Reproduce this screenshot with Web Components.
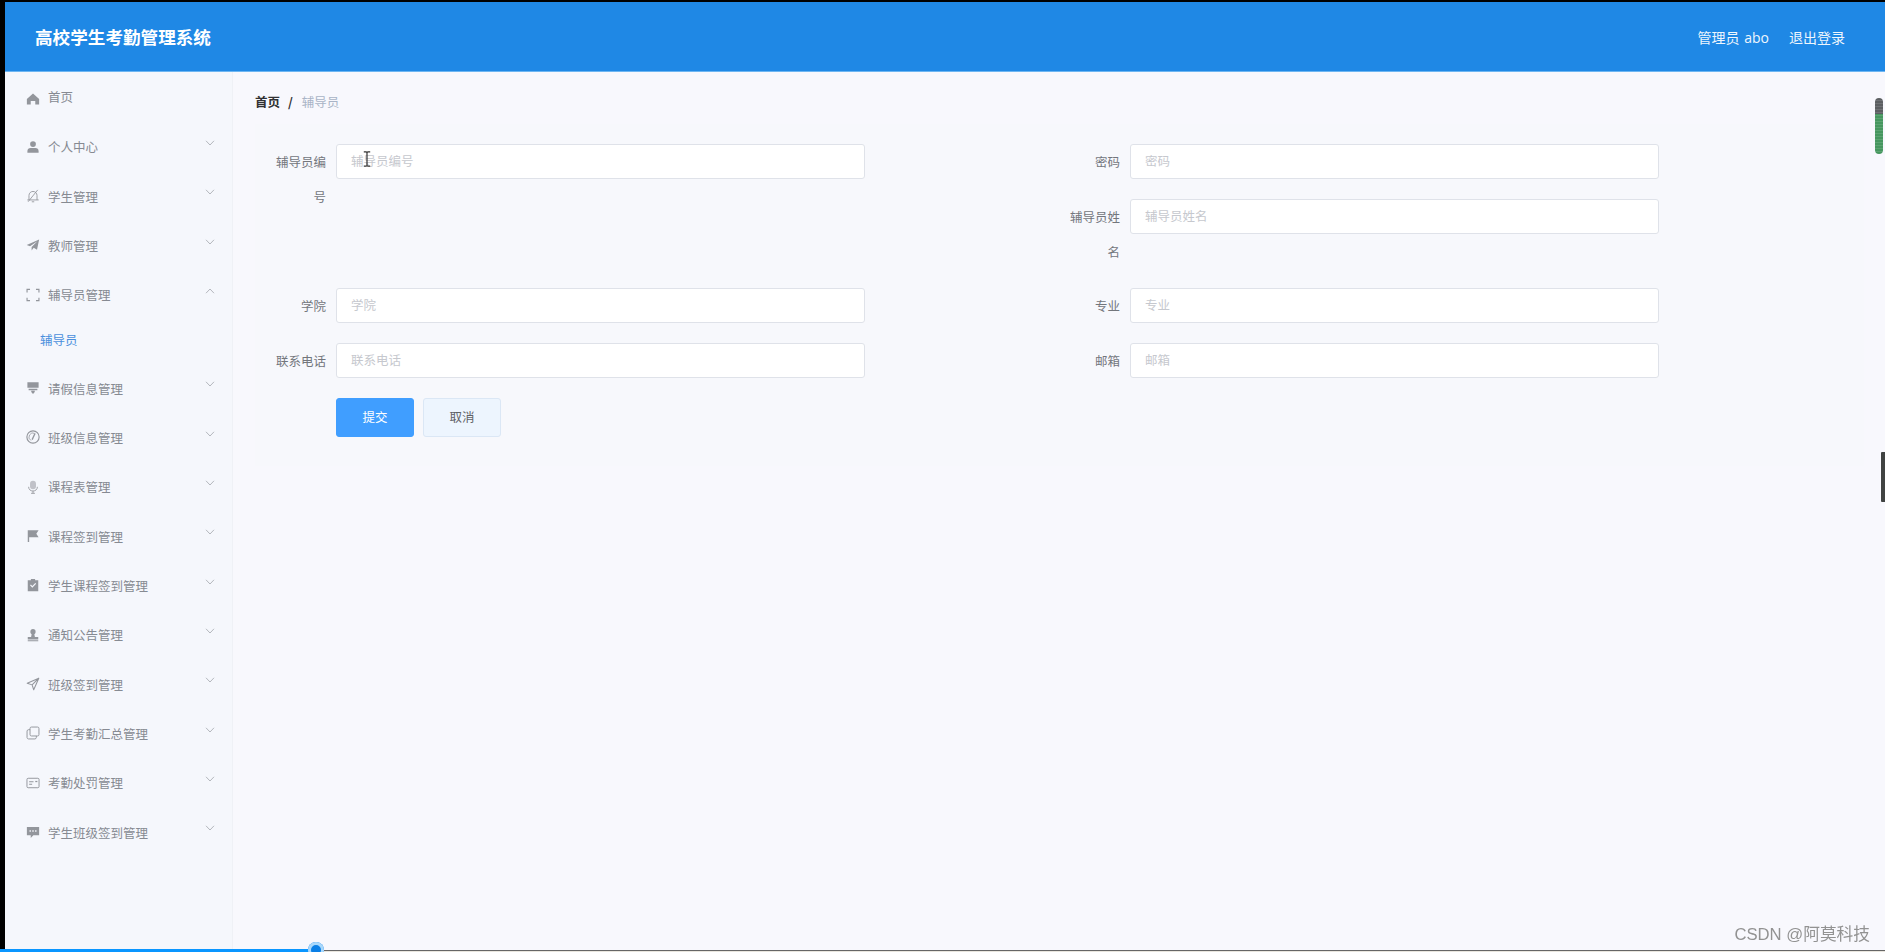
<!DOCTYPE html>
<html lang="zh">
<head>
<meta charset="utf-8">
<title>高校学生考勤管理系统</title>
<style>
  html, body { margin: 0; height: 100%; overflow: hidden; }
  body {
    background: #000;
    font-family: "Noto Sans CJK SC", "Noto Sans", sans-serif;
  }
</style>
</head>
<body>
<app-shell>
  <top-bar slot="top" title="高校学生考勤管理系统">
    <span>管理员 abo</span>
    <span>退出登录</span>
  </top-bar>
  <side-menu slot="side">
    <side-item class="first" icon="home" label="首页" plain></side-item>
    <side-item icon="user" label="个人中心"></side-item>
    <side-item icon="bell" label="学生管理"></side-item>
    <side-item icon="plane" label="教师管理"></side-item>
    <side-item icon="corners" label="辅导员管理" open><side-sub>辅导员</side-sub></side-item>
    <side-item icon="pin" label="请假信息管理"></side-item>
    <side-item icon="gauge" label="班级信息管理"></side-item>
    <side-item icon="mic" label="课程表管理"></side-item>
    <side-item icon="flag" label="课程签到管理"></side-item>
    <side-item icon="clip" label="学生课程签到管理"></side-item>
    <side-item icon="stamp" label="通知公告管理"></side-item>
    <side-item icon="send" label="班级签到管理"></side-item>
    <side-item icon="copy" label="学生考勤汇总管理"></side-item>
    <side-item icon="card" label="考勤处罚管理"></side-item>
    <side-item icon="chat" label="学生班级签到管理"></side-item>
  </side-menu>
  <crumb-bar home="首页" current="辅导员"></crumb-bar>
  <form-panel>
    <form-field class="tall" label="辅导员编号"></form-field>
    <form-field label="密码"></form-field>
    <form-field label="辅导员姓名"></form-field>
    <form-field label="学院"></form-field>
    <form-field label="专业"></form-field>
    <form-field label="联系电话"></form-field>
    <form-field label="邮箱"></form-field>
    <form-actions>
      <ui-button kind="primary">提交</ui-button>
      <ui-button>取消</ui-button>
    </form-actions>
  </form-panel>
</app-shell>
<screen-marks></screen-marks>

<script>
  const ICONS = {
    home: '<path fill="currentColor" d="M8 1.6 15 8v6.4h-4.4v-4.2H5.4v4.2H1V8z"/>',
    user: '<circle fill="currentColor" cx="8" cy="4.6" r="3.3"/><path fill="currentColor" d="M1.6 14.6v-2c0-2 1.6-3.4 3.6-3.4h5.6c2 0 3.6 1.4 3.6 3.4v2z"/>',
    bell: '<path fill="none" stroke="currentColor" d="M1.5 12.5h13M3.4 12.5V7.4C3.4 4.8 5.4 2.8 8 2.8s4.6 2 4.6 4.6v5.1M6.6 14.6h2.8M2.4 14.6 13.4 1"/>',
    plane: '<path fill="currentColor" d="M15 1.6 12.6 13.4 8.8 11 6.4 14.4V10.2L13 3.6 4.6 9.4.8 8z"/>',
    corners: '<path fill="none" stroke="currentColor" stroke-width="1.3" d="M1.2 5V1.5h3.4M11.4 1.5h3.4V5M14.8 11v3.5h-3.4M4.6 14.5H1.2V11"/>',
    pin: '<path fill="currentColor" d="M1.6 1.4h12.8v6.4H1.6zM3 8.8h10v1.8H3zM6 11.2h4v1.4L8 14.8 6 12.6z"/>',
    gauge: '<circle fill="none" stroke="currentColor" stroke-width="1.3" cx="8" cy="8" r="7"/><circle fill="none" stroke="currentColor" stroke-width=".8" cx="8" cy="8" r="4.6" stroke-dasharray="15 14" transform="rotate(120 8 8)"/><path fill="none" stroke="currentColor" stroke-width="1.5" d="M7 11 10 4.6"/>',
    mic: '<rect fill="currentColor" opacity=".55" x="4.6" y=".8" width="6.8" height="9.8" rx="3.4"/><path fill="none" stroke="currentColor" d="M3 7.8c0 3 2.2 4.8 5 4.8s5-1.8 5-4.8M8 12.6V15.2M5.8 15.2h4.4"/>',
    flag: '<path fill="currentColor" d="M2 1.4h12.4l-2.6 4 2.6 4H3.6v5.4H2z"/>',
    clip: '<path fill="currentColor" fill-rule="evenodd" d="M5.6 1h4.8v1.6H14v12.4H2V2.6h3.6zM4.6 8.4l2.6 2.7 4.4-4.5-1-1-3.4 3.4-1.6-1.6z"/>',
    stamp: '<circle fill="currentColor" cx="8" cy="4.2" r="3"/><path fill="currentColor" d="M6.6 6.6h2.8l.8 3.6H14v3H2v-3h3.8zM2 14h12v1H2z"/>',
    send: '<path fill="none" stroke="currentColor" stroke-width="1.2" stroke-linejoin="round" d="M14.6 1.4 1.4 7.2 7 9l1.8 5.6zM7 9l7.6-7.6"/>',
    copy: '<rect fill="none" stroke="currentColor" stroke-width="1.1" x="4.6" y="1.2" width="10.2" height="10.2" rx="1.6"/><path fill="none" stroke="currentColor" stroke-width="1.1" d="M4.6 4.2H2.8c-.9 0-1.6.7-1.6 1.6v7.4c0 .9.7 1.6 1.6 1.6h7.4c.9 0 1.6-.7 1.6-1.6v-1.8"/>',
    card: '<rect fill="none" stroke="currentColor" stroke-width="1.1" x="1.1" y="2.6" width="13.8" height="10.8" rx="1.4"/><path fill="none" stroke="currentColor" stroke-width="1.2" d="M3.6 6.6h5M3.6 9.4h3.4"/><path fill="currentColor" d="M10.6 5.6h2.4v1.4h-2.4z"/>',
    chat: '<path fill="currentColor" fill-rule="evenodd" d="M1 2.2h14v9.6H8.4L5.4 14.8V11.8H1zM4 6v1.6h1.6V6zM7.2 6v1.6h1.6V6zM10.4 6v1.6H12V6z"/>'
  };

  class AppShell extends HTMLElement {
    constructor() {
      super();
      this.attachShadow({ mode: 'open' });
      this.shadowRoot.innerHTML = `
      <style>
      :host {
        display: flex;
        flex-direction: column;
        height: 950px;
        margin: 2px 0 0 5px;
        background: #f8f8fd;
      }
      .body { flex: 1; display: flex; min-height: 0; }
      main { flex: 1; padding: 20px 21px 0 22px; min-width: 0; }
      </style>
      <slot name="top"></slot>
      <div class="body">
        <slot name="side"></slot>
        <main><slot></slot></main>
      </div>`;
    }
  }

  class TopBar extends HTMLElement {
    constructor() {
      super();
      this.attachShadow({ mode: 'open' });
      this.shadowRoot.innerHTML = `
      <style>
      :host {
        display: flex;
        align-items: center;
        justify-content: space-between;
        height: 69px;
        padding: 0 40px 0 30px;
        background: #1f88e5;
        border-bottom: 1px solid #6db6f2;
        color: #fff;
      }
      h1 { margin: 0; font-size: 17.6px; font-weight: 700; line-height: 70px; }
      .right {
        display: flex;
        gap: 20px;
        font: 14px "Open Sans", "Noto Sans CJK SC", sans-serif;
        word-spacing: 1px;
        color: #eef6fd;
      }
      </style>
      <h1></h1>
      <div class="right"><slot></slot></div>`;
      this.shadowRoot.querySelector('h1').textContent = this.getAttribute('title');
    }
  }

  class SideMenu extends HTMLElement {
    constructor() {
      super();
      this.attachShadow({ mode: 'open' });
      this.shadowRoot.innerHTML = `
      <style>
      :host {
        display: block;
        width: 227px;
        flex: none;
        background: #f5f7fc;
        border-right: 1px solid #eff1f6;
      }
      </style>
      <slot></slot>`;
    }
  }

  class SideItem extends HTMLElement {
    constructor() {
      super();
      this.attachShadow({ mode: 'open' });
      const open = this.hasAttribute('open');
      const arrow = this.hasAttribute('plain') ? '' :
        `<svg class="arrow" width="10" height="6" viewBox="0 0 10 6"><path fill="none" stroke="#b4b7bd" d="${open ? 'M1 5.2 5 1l4 4.2' : 'M1 .8 5 5l4-4.2'}"/></svg>`;
      this.shadowRoot.innerHTML = `
      <style>
      :host { display: block; color: #868a92; }
      :host(.first) .row { height: 50px; }
      :host(.first) .icon { margin-top: 4px; }
      :host(.first) span { margin-bottom: 2px; }
      .row {
        display: flex;
        align-items: center;
        gap: 8px;
        height: 49.35px;
        padding-left: 21px;
        position: relative;
        font-size: 12.5px;
      }
      .icon { width: 14px; height: 14px; color: #93969c; flex: none; }
      .arrow { position: absolute; left: 200px; top: 18px; }
      </style>
      <div class="row">
        <svg class="icon" viewBox="0 0 16 16">${ICONS[this.getAttribute('icon')]}</svg>
        <span></span>
        ${arrow}
      </div>
      <slot></slot>`;
      this.shadowRoot.querySelector('span').textContent = this.getAttribute('label');
    }
  }

  class SideSub extends HTMLElement {
    constructor() {
      super();
      this.attachShadow({ mode: 'open' });
      this.shadowRoot.innerHTML = `
      <style>
      :host {
        display: block;
        height: 44px;
        padding-left: 35px;
        font-size: 12.5px;
        line-height: 41px;
        color: #4a8fdc;
      }
      </style>
      <slot></slot>`;
    }
  }

  class CrumbBar extends HTMLElement {
    constructor() {
      super();
      this.attachShadow({ mode: 'open' });
      this.shadowRoot.innerHTML = `
      <style>
      :host {
        display: flex;
        height: 20px;
        margin-bottom: 12px;
        line-height: 20px;
        font-size: 12.5px;
      }
      .home { font-weight: 700; color: #303133; }
      .sep { margin: 0 9px 0 8px; font-weight: 700; color: #303133; }
      .current { color: #a9b4c6; }
      </style>
      <span class="home"></span><span class="sep">/</span><span class="current"></span>`;
      this.shadowRoot.querySelector('.home').textContent = this.getAttribute('home');
      this.shadowRoot.querySelector('.current').textContent = this.getAttribute('current');
    }
  }

  class FormPanel extends HTMLElement {
    constructor() {
      super();
      this.attachShadow({ mode: 'open' });
      this.shadowRoot.innerHTML = `
      <style>
      :host {
        display: grid;
        grid-template-columns: 794px 1fr;
        row-gap: 20px;
        padding: 20px 0 29px;
        background: #f7f8fc;
      }
      ::slotted(.tall) { grid-row: span 2; }
      </style>
      <slot></slot>`;
    }
  }

  class FormField extends HTMLElement {
    constructor() {
      super();
      this.attachShadow({ mode: 'open' });
      this.shadowRoot.innerHTML = `
      <style>
      :host { display: flex; gap: 10px; align-items: flex-start; }
      label {
        width: 52px;
        margin: 0 0 -1px 19px;
        flex: none;
        text-align: right;
        font-size: 12.5px;
        line-height: 35px;
        color: #73767c;
      }
      input {
        box-sizing: border-box;
        width: 529px;
        height: 35px;
        padding: 0 14px 2px;
        border: 1px solid #dfe2e9;
        border-radius: 3px;
        background: #fff;
        font: 12.5px "Noto Sans CJK SC", "Noto Sans", sans-serif;
        outline: none;
      }
      input::placeholder { color: #c6c8ce; opacity: 1; }
      </style>
      <label></label><input>`;
      const text = this.getAttribute('label');
      this.shadowRoot.querySelector('label').textContent = text;
      this.shadowRoot.querySelector('input').placeholder = text;
    }
  }

  class FormActions extends HTMLElement {
    constructor() {
      super();
      this.attachShadow({ mode: 'open' });
      this.shadowRoot.innerHTML = `
      <style>
      :host { display: flex; gap: 9px; padding-left: 81px; grid-column: 1; }
      </style>
      <slot></slot>`;
    }
  }

  class UiButton extends HTMLElement {
    constructor() {
      super();
      this.attachShadow({ mode: 'open' });
      this.shadowRoot.innerHTML = `
      <style>
      :host {
        display: flex;
        align-items: center;
        justify-content: center;
        box-sizing: border-box;
        width: 78px;
        height: 39px;
        padding-bottom: 2px;
        border: 1px solid #dbe7f5;
        border-radius: 3px;
        background: #edf5fe;
        color: #606266;
        font-size: 12.5px;
      }
      :host([kind="primary"]) {
        border-color: #409eff;
        background: #409eff;
        color: #fff;
      }
      </style>
      <slot></slot>`;
    }
  }

  // things that sit over the page in the recording: cursor, scroll marks, player bar, watermark
  class ScreenMarks extends HTMLElement {
    constructor() {
      super();
      this.attachShadow({ mode: 'open' });
      this.shadowRoot.innerHTML = `
      <style>
      :host { position: fixed; inset: 0; pointer-events: none; }
      .cursor { position: absolute; left: 363px; top: 151px; }
      .green {
        position: absolute;
        left: 1875px;
        top: 98px;
        width: 8px;
        height: 56px;
        border-radius: 4px;
        background:
          repeating-linear-gradient(transparent 0 2px, rgba(255,255,255,.12) 2px 3px),
          linear-gradient(#5c5f62 0 28%, #46975f 28% 100%);
      }
      .dark {
        position: absolute;
        left: 1881px;
        top: 452px;
        width: 4px;
        height: 50px;
        background: #404342;
        border-radius: 1px 0 0 1px;
      }
      .mark {
        position: absolute;
        right: 15px;
        top: 921px;
        font: 16.7px "Liberation Sans", "Noto Sans CJK SC", sans-serif;
        color: #929292;
      }
      .track {
        position: absolute;
        left: 0;
        right: 0;
        top: 950px;
        height: 2px;
        background: #e9e6de;
        border-top: 1px solid #666;
        box-sizing: border-box;
      }
      .done {
        position: absolute;
        left: 0;
        top: 949px;
        width: 316px;
        height: 3px;
        background: #0a96ff;
      }
      .dot {
        position: absolute;
        left: 308px;
        top: 942px;
        width: 16px;
        height: 16px;
        border-radius: 50%;
        background: #0a7fe6;
        box-shadow: inset 0 0 0 3px #a9d8fb;
      }
      .clip { position: absolute; left: 0; right: 0; top: 0; height: 952px; overflow: hidden; }
      </style>
      <div class="clip">
        <svg class="cursor" width="8" height="16" viewBox="0 0 8 16"><path fill="none" stroke="#333" stroke-width="1.2" d="M.8.8h2.4L4 1.6l.8-.8h2.4M4 1.6v12.8M.8 15.2h2.4l.8-.8.8.8h2.4"/></svg>
        <div class="green"></div>
        <div class="dark"></div>
        <div class="mark">CSDN @阿莫科技</div>
        <div class="track"></div>
        <div class="done"></div>
        <div class="dot"></div>
      </div>`;
    }
  }

  customElements.define('app-shell', AppShell);
  customElements.define('top-bar', TopBar);
  customElements.define('side-menu', SideMenu);
  customElements.define('side-item', SideItem);
  customElements.define('side-sub', SideSub);
  customElements.define('crumb-bar', CrumbBar);
  customElements.define('form-panel', FormPanel);
  customElements.define('form-field', FormField);
  customElements.define('form-actions', FormActions);
  customElements.define('ui-button', UiButton);
  customElements.define('screen-marks', ScreenMarks);
</script>
</body>
</html>
